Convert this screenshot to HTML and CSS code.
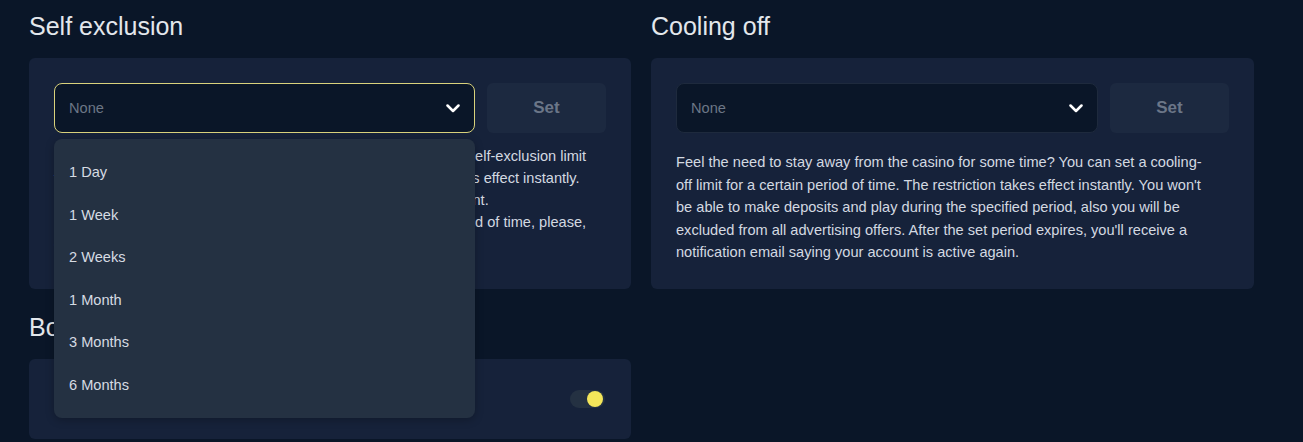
FILE: index.html
```html
<!DOCTYPE html>
<html lang="en">
<head>
<meta charset="UTF-8">
<meta name="viewport" content="width=device-width, initial-scale=1.0">
<title>Responsible gaming</title>
<link rel="stylesheet" href="styles.css">
</head>
<body>
  <div class="page">
    <section class="block">
      <h2>Self exclusion</h2>
      <div class="card">
        <div class="controls">
          <div class="select">
            <div class="select-box select-active">
              <span class="placeholder">None</span>
              <svg class="chevron" width="14" height="9" viewBox="0 0 14 9"><polyline points="1.5,1.5 7,7 12.5,1.5" fill="none" stroke="#fff" stroke-width="2.5" stroke-linecap="round" stroke-linejoin="round"/></svg>
            </div>
            <ul class="options">
              <li>1 Day</li>
              <li>1 Week</li>
              <li>2 Weeks</li>
              <li>1 Month</li>
              <li>3 Months</li>
              <li>6 Months</li>
            </ul>
          </div>
          <button class="btn-set" type="button">Set</button>
        </div>
        <p class="note note-tight">
          Need a longer break from the casino? You can set a permanent self-exclusion limit<br>
          for a very long period of time or even forever. The restriction takes effect instantly.<br>
          You won't be able to log in, make deposits and play on the account.<br>
          If you would like to exclude yourself entirely for an indefinite period of time, please,<br>
          contact our support team.
        </p>
      </div>
    </section>

    <section class="block">
      <h2>Cooling off</h2>
      <div class="card">
        <div class="controls">
          <div class="select">
            <div class="select-box">
              <span class="placeholder">None</span>
              <svg class="chevron" width="14" height="9" viewBox="0 0 14 9"><polyline points="1.5,1.5 7,7 12.5,1.5" fill="none" stroke="#fff" stroke-width="2.5" stroke-linecap="round" stroke-linejoin="round"/></svg>
            </div>
          </div>
          <button class="btn-set" type="button">Set</button>
        </div>
        <p class="note">
          Feel the need to stay away from the casino for some time? You can set a cooling-<br>
          off limit for a certain period of time. The restriction takes effect instantly. You won't<br>
          be able to make deposits and play during the specified period, also you will be<br>
          excluded from all advertising offers. After the set period expires, you'll receive a<br>
          notification email saying your account is active again.
        </p>
      </div>
    </section>

    <section class="block block-next">
      <h2>Bonuses</h2>
      <div class="card">
        <div class="toggle-row">
          <span class="toggle-label">Refuse to receive bonuses</span>
          <span class="toggle"><span class="knob"></span></span>
        </div>
      </div>
    </section>
  </div>
</body>
</html>
```

FILE: styles.css
```css
body {
  margin: 0;
  background-color: #0a1628;
  font-family: "Liberation Sans", Arial, sans-serif;
  color: #d3d9e1;
}

.page {
  display: grid;
  grid-template-columns: 602px 603px;
  column-gap: 20px;
  padding: 12px 29px 0;
}

.block {
  display: flex;
  flex-direction: column;
}

.block-next {
  margin-top: 24px;
}

h2 {
  margin: 0 0 18px;
  font-size: 25px;
  font-weight: normal;
  line-height: 28px;
  color: #e3e7ec;
}

.card {
  flex: 1;
  background-color: #16223a;
  border-radius: 6px;
  padding: 25px;
}

.controls {
  display: flex;
  gap: 12px;
}

.select {
  position: relative;
  flex: 1;
}

.select-box {
  display: flex;
  align-items: center;
  justify-content: space-between;
  box-sizing: border-box;
  height: 50px;
  padding: 0 14px;
  background-color: #0a1628;
  border: 1px solid #1e2a3d;
  border-radius: 8px;
}

.select-active {
  border-color: #d9d27c;
}

.placeholder {
  font-size: 14.6px;
  color: #6c7686;
}

.chevron {
  display: block;
}

.options {
  position: absolute;
  top: 56px;
  left: 0;
  right: 0;
  z-index: 5;
  margin: 0;
  padding: 12px 0;
  list-style: none;
  background-color: #243142;
  border-radius: 8px;
  box-shadow: 0 2px 8px rgba(0, 0, 0, 0.25);
}

.options li {
  display: flex;
  align-items: center;
  height: 42.5px;
  padding: 0 15px;
  font-size: 14.6px;
  color: #d6dbe2;
}

.btn-set {
  width: 119px;
  height: 50px;
  padding-bottom: 2px;
  background-color: #1c2940;
  color: #6b7688;
  border: none;
  border-radius: 6px;
  font-family: inherit;
  font-size: 17px;
  font-weight: bold;
}

.note {
  margin: 18px 0 0;
  font-size: 14.6px;
  line-height: 22.5px;
  color: #d3d9e1;
}

.note-tight {
  margin-top: 12px;
  line-height: 22px;
}

.toggle-row {
  display: flex;
  align-items: center;
  justify-content: space-between;
  height: 30px;
}

.toggle-label {
  font-size: 14.6px;
}

.toggle {
  position: relative;
  width: 35px;
  height: 18px;
  margin-right: 1px;
  background-color: #243142;
  border-radius: 9px;
}

.knob {
  position: absolute;
  top: 1px;
  right: 2px;
  width: 16px;
  height: 16px;
  background-color: #f4e65a;
  border-radius: 50%;
}
```
